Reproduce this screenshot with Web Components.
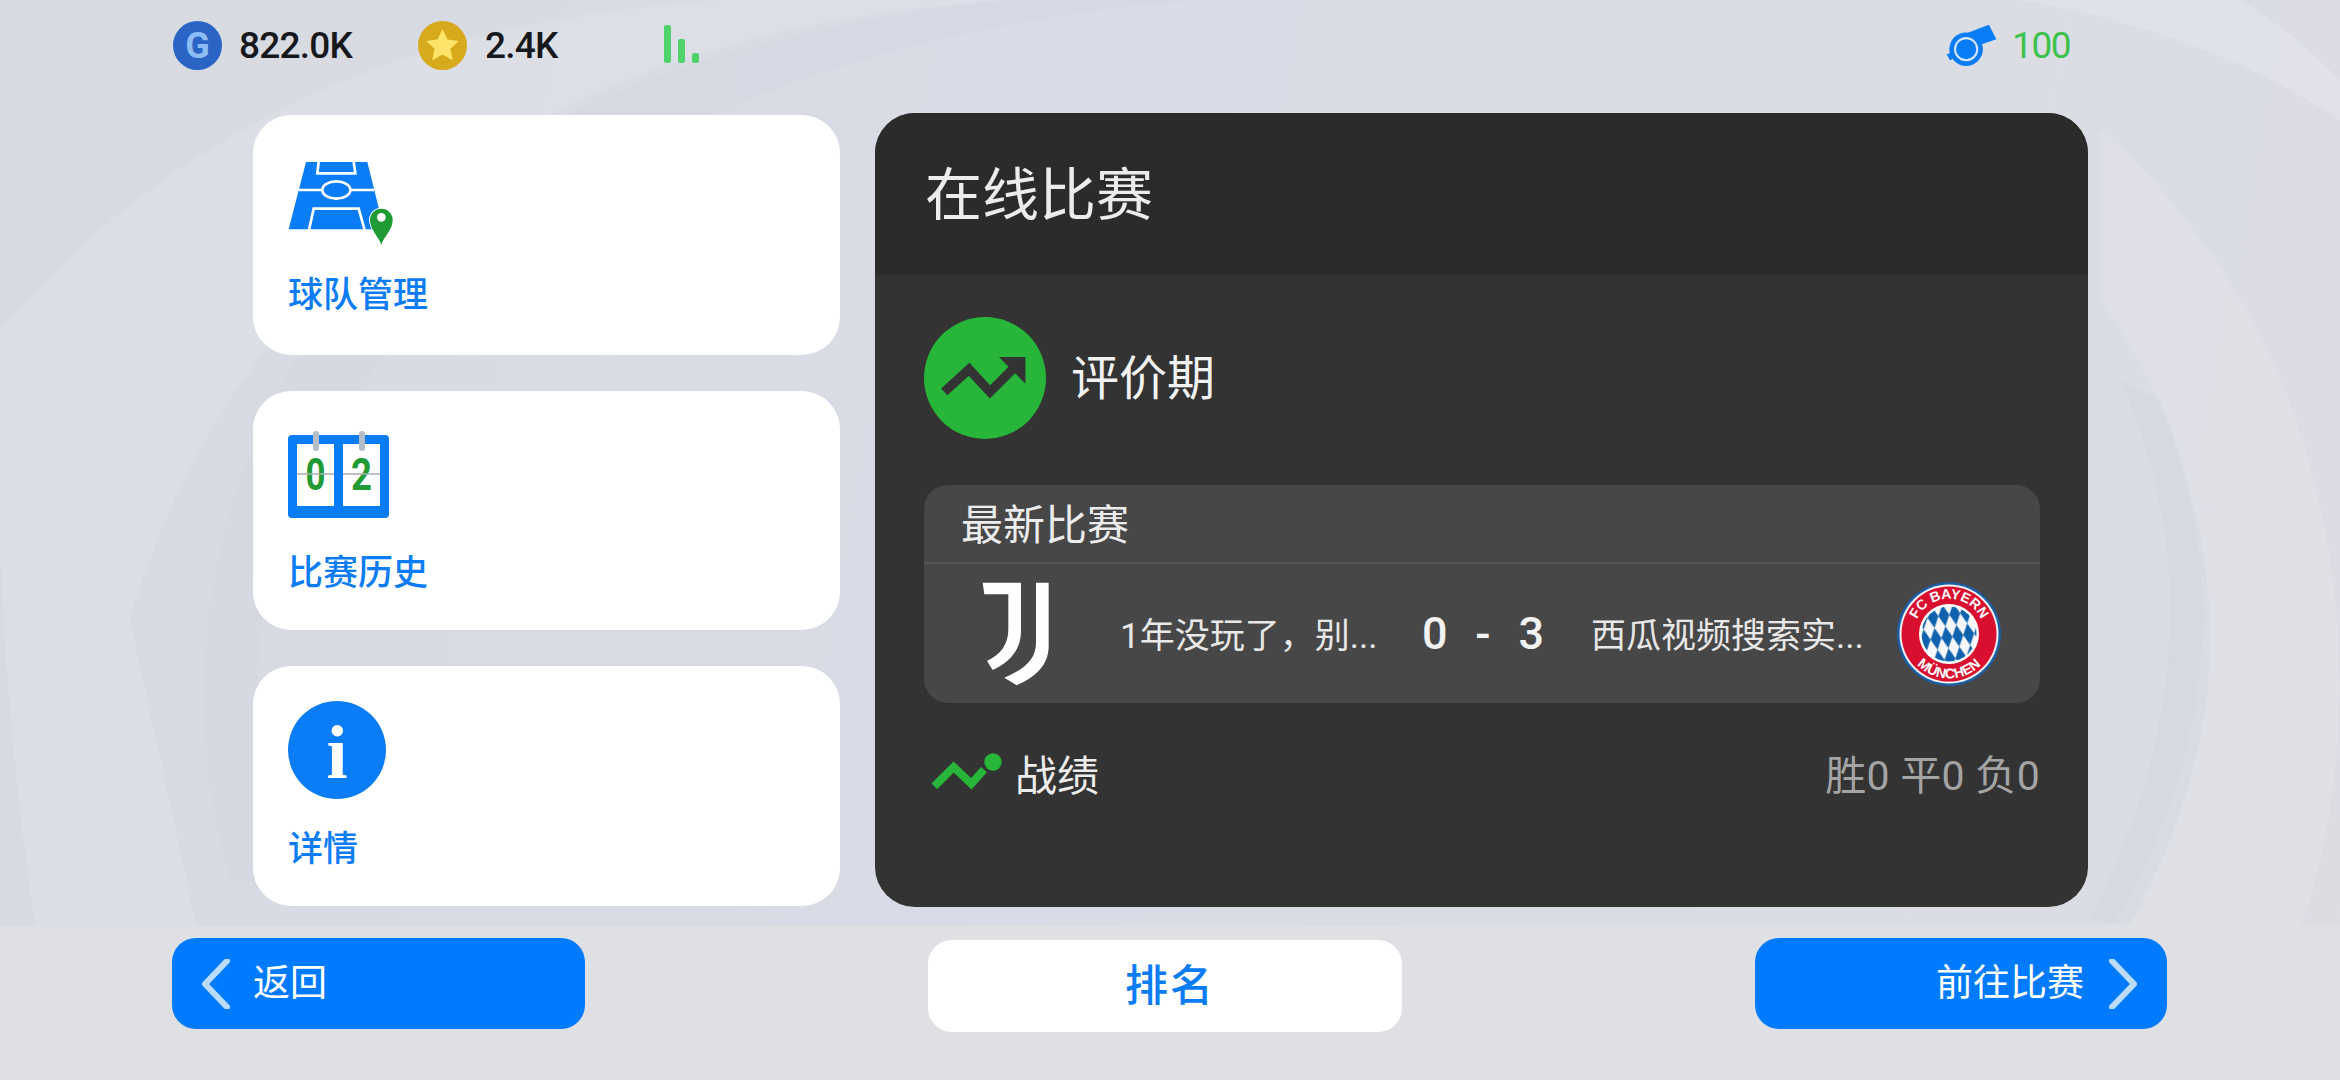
<!DOCTYPE html>
<html lang="zh">
<head>
<meta charset="utf-8">
<title>在线比赛</title>
<style>
  html, body { margin: 0; padding: 0; background: #dadde5; }
</style>
</head>
<body>
<game-screen></game-screen>
<script>
const FONT = `Roboto, "Noto Sans CJK SC", sans-serif`;

const ICONS = {
  gold: `<svg width="49" height="49" viewBox="0 0 49 49">
      <circle cx="24.5" cy="24.5" r="24.5" fill="#2a64c4"/>
      <text x="24" y="37" text-anchor="middle" font-family="Roboto" font-weight="700" font-size="36" fill="#8dbdf5">G</text>
    </svg>`,
  coin: `<svg width="49" height="49" viewBox="0 0 49 49">
      <circle cx="24.5" cy="24.5" r="24.5" fill="#d6aa1c"/>
      <path d="M24.5 8l5 10.6 11.4 1.4-8.4 7.8 2.2 11.4-10.2-5.7-10.2 5.7 2.2-11.4-8.4-7.8 11.4-1.4z" fill="#fde468"/>
    </svg>`,
  bars: `<svg width="36" height="38" viewBox="0 0 36 38">
      <rect x="0" y="0" width="7" height="38" rx="2" fill="#4fd36a"/>
      <rect x="14" y="14" width="7" height="24" rx="2" fill="#4fd36a"/>
      <rect x="28" y="28" width="7" height="10" rx="2" fill="#4fd36a"/>
    </svg>`,
  whistle: `<svg width="52" height="42" viewBox="140 70 155 125">
      <path d="M190 102L268 72l22 43-52 18z" fill="#0a7cf5"/>
      <circle cx="200" cy="145" r="50" fill="#0a7cf5"/>
      <path d="M142 160l20-6 6 16-16 8z" fill="#0a7cf5"/>
      <circle cx="200" cy="145" r="33" fill="none" stroke="#d7e6fa" stroke-width="6"/>
      <circle cx="200" cy="145" r="27" fill="#0a7cf5"/>
    </svg>`,
  pitch: `<svg width="105" height="85" viewBox="140 185 315 255">
      <path d="M194 188H378L412 325 396 390H142z" fill="#0a7cf5"/>
      <path d="M172 272H398M232 188l-4 34H342l-5-34M203 392l14-64H352l18 64" fill="none" stroke="#fff" stroke-width="8"/>
      <ellipse cx="285" cy="272" rx="42" ry="26" fill="#0a7cf5" stroke="#fff" stroke-width="8"/>
      <path d="M420 436c-8-24-34-44-34-74a34 34 0 0 1 68 0c0 30-26 50-34 74z" fill="#1f9a35" stroke="#fff" stroke-width="6" paint-order="stroke"/>
      <circle cx="420" cy="354" r="13" fill="#fff"/>
    </svg>`,
  score: `<svg width="102" height="90" viewBox="0 0 102 90">
      <rect x="0" y="4" width="101" height="83" rx="4" fill="#0a7cf5"/>
      <rect x="9" y="13" width="37" height="62" fill="#fff"/>
      <rect x="55" y="13" width="37" height="62" fill="#fff"/>
      <rect x="25" y="0" width="6" height="20" rx="3" fill="#b4bcc6"/>
      <rect x="71" y="0" width="6" height="20" rx="3" fill="#b4bcc6"/>
      <text x="27.5" y="59" text-anchor="middle" font-family="Roboto" font-weight="700" font-size="44" fill="#1f9a35" textLength="20" lengthAdjust="spacingAndGlyphs">0</text>
      <text x="73.5" y="59" text-anchor="middle" font-family="Roboto" font-weight="700" font-size="44" fill="#1f9a35" textLength="21" lengthAdjust="spacingAndGlyphs">2</text>
      <path d="M9 43H46M55 43H92" stroke="#a9afb6" stroke-width="1.5"/>
    </svg>`,
  info: `<svg width="98" height="98" viewBox="0 0 98 98">
      <circle cx="49" cy="49" r="49" fill="#0a7cf5"/>
      <text x="49" y="77" text-anchor="middle" font-family="Liberation Serif" font-weight="700" font-size="76" fill="#fff">i</text>
    </svg>`,
  trend: `<svg width="122" height="122" viewBox="69 79 368 368">
      <circle cx="253" cy="263" r="184" fill="#27b53a"/>
      <path d="M130 305l75-68 63 68 72-72" fill="none" stroke="#333" stroke-width="28"/>
      <path d="M295 200h80v80z" fill="#333"/>
    </svg>`,
  spark: `<svg width="74" height="40" viewBox="90 100 220 120">
      <path d="M102 203l58-58 53 50 38-42" fill="none" stroke="#27b53a" stroke-width="24"/>
      <circle cx="278" cy="130" r="26" fill="#27b53a"/>
    </svg>`,
  juve: `<svg width="70" height="105" viewBox="180 300 210 315">
      <path d="M185 305H300V450C300 510 262 545 215 567L198 540C240 520 262 490 262 445V340H190z" fill="#fff"/>
      <path d="M345 305H383V495C383 555 340 590 287 613L250 590C310 565 345 535 345 485z" fill="#fff"/>
    </svg>`,
  bayern: `<svg width="104" height="104" viewBox="0 0 104 104">
      <defs>
        <pattern id="rauten" width="11" height="22" patternUnits="userSpaceOnUse" patternTransform="rotate(-8 52 52)">
          <rect width="11" height="22" fill="#f4f6f9"/>
          <path d="M5.5 0L11 11 5.5 22 0 11z" fill="#0f62ad"/>
        </pattern>
        <path id="arcTop" d="M18 60A35 35 0 1 1 86 60"/>
        <path id="arcBottom" d="M8 58A44.400 44.400 0 0 0 96 58"/>
      </defs>
      <circle cx="52" cy="52" r="52" fill="#1b5ea3"/>
      <circle cx="52" cy="52" r="49.500" fill="#f3f3f5"/>
      <circle cx="52" cy="52" r="47.500" fill="#d90f2f"/>
      <circle cx="52" cy="52" r="30" fill="#fff"/>
      <circle cx="52" cy="52" r="27.500" fill="url(#rauten)"/>
      <text font-family="Liberation Sans" font-weight="700" font-size="14" fill="#fff" text-anchor="middle"><textPath href="#arcTop" startOffset="50%">FC BAYERN</textPath></text>
      <text font-family="Liberation Sans" font-weight="700" font-size="14" fill="#fff" text-anchor="middle"><textPath href="#arcBottom" startOffset="50%">MÜNCHEN</textPath></text>
    </svg>`,
  chevronLeft: `<svg width="30" height="50" viewBox="0 0 30 50"><path d="M27 2L5 25l22 23" fill="none" stroke="#bcdcff" stroke-width="6" stroke-linecap="round" stroke-linejoin="round"/></svg>`,
  chevronRight: `<svg width="30" height="50" viewBox="0 0 30 50"><path d="M3 2l22 23L3 48" fill="none" stroke="#bcdcff" stroke-width="6" stroke-linecap="round" stroke-linejoin="round"/></svg>`
};

class GameIcon extends HTMLElement {
  connectedCallback() {
    this.attachShadow({ mode: 'open' });
    this.shadowRoot.innerHTML = `
      <style>
        :host { display: inline-flex; flex: none; }
        svg { display: block; }
      </style>
      ${ICONS[this.getAttribute('name')]}
    `;
  }
}
customElements.define('game-icon', GameIcon);

class StatItem extends HTMLElement {
  connectedCallback() {
    this.attachShadow({ mode: 'open' });
    this.shadowRoot.innerHTML = `
      <style>
        :host {
          display: inline-flex;
          align-items: center;
          gap: var(--stat-gap, 17px);
          font: 500 37px ${FONT};
          letter-spacing: var(--stat-spacing, -0.8px);
          color: var(--stat-color, #16181c);
        }
      </style>
      <slot name="icon"></slot>
      <slot></slot>
    `;
  }
}
customElements.define('stat-item', StatItem);

class TopBar extends HTMLElement {
  connectedCallback() {
    this.attachShadow({ mode: 'open' });
    this.shadowRoot.innerHTML = `
      <style>
        :host {
          display: flex;
          align-items: center;
          height: 90px;
          padding: 0 270px 0 173px;
          box-sizing: border-box;
        }
        .coin { margin-left: 66px; --stat-gap: 18px; }
        .bars { margin-left: 106px; margin-top: -2px; }
        .whistle {
          margin-left: auto;
          --stat-gap: 14px;
          --stat-color: #3cc24a;
          --stat-spacing: -1.5px;
          font-weight: 400;
        }
      </style>
      <stat-item><game-icon slot="icon" name="gold"></game-icon>822.0K</stat-item>
      <stat-item class="coin"><game-icon slot="icon" name="coin"></game-icon>2.4K</stat-item>
      <game-icon class="bars" name="bars"></game-icon>
      <stat-item class="whistle"><game-icon slot="icon" name="whistle"></game-icon>100</stat-item>
    `;
  }
}
customElements.define('top-bar', TopBar);

class MenuCard extends HTMLElement {
  connectedCallback() {
    this.attachShadow({ mode: 'open' });
    this.shadowRoot.innerHTML = `
      <style>
        :host {
          display: flex;
          flex-direction: column;
          height: 240px;
          padding-left: 35px;
          box-sizing: border-box;
          background: #fff;
          border-radius: 38px;
          font: 500 35px/32px ${FONT};
          color: #0a7cf5;
        }
        .icon {
          height: var(--icon-height, 164px);
          display: flex;
          align-items: center;
          padding-top: var(--icon-shift, 0);
          box-sizing: border-box;
        }
      </style>
      <div class="icon"><slot name="icon"></slot></div>
      <slot></slot>
    `;
  }
}
customElements.define('menu-card', MenuCard);

class MatchRow extends HTMLElement {
  connectedCallback() {
    this.attachShadow({ mode: 'open' });
    this.shadowRoot.innerHTML = `
      <style>
        :host {
          display: flex;
          align-items: center;
          height: 139px;
          padding-left: 57px;
          font: 400 35px ${FONT};
          color: #e8e8e8;
        }
        .home { margin-left: 69px; width: 302px; padding-bottom: 3px; white-space: nowrap; }
        .score {
          width: 122px;
          display: flex;
          justify-content: space-between;
          font-weight: 500;
          font-size: 45px;
          color: #f2f2f2;
        }
        .away { margin-left: 47px; width: 306px; padding-bottom: 3px; white-space: nowrap; }
      </style>
      <game-icon name="juve"></game-icon>
      <span class="home"><slot name="home"></slot></span>
      <span class="score"><span>0</span><span>-</span><span>3</span></span>
      <span class="away"><slot name="away"></slot></span>
      <game-icon name="bayern"></game-icon>
    `;
  }
}
customElements.define('match-row', MatchRow);

class MatchPanel extends HTMLElement {
  connectedCallback() {
    this.attachShadow({ mode: 'open' });
    this.shadowRoot.innerHTML = `
      <style>
        :host {
          display: block;
          width: 1213px;
          height: 794px;
          background: #333;
          border-radius: 40px;
          overflow: hidden;
          color: #ececec;
          font-family: ${FONT};
        }
        header {
          height: 162px;
          padding-left: 50px;
          display: flex;
          align-items: center;
          padding-bottom: 8px;
          box-sizing: border-box;
          background: #2b2b2b;
          font-size: 57px;
          font-weight: 400;
        }
        .body { padding: 42px 48px 0 49px; }
        .rating {
          display: flex;
          align-items: center;
          gap: 25px;
          height: 122px;
          font-size: 48px;
          font-weight: 400;
          color: #f2f2f2;
        }
        .rating span { padding-bottom: 8px; }
        .latest {
          margin-top: 46px;
          background: #474747;
          border-radius: 24px;
        }
        .latest h3 {
          margin: 0;
          height: 73px;
          padding: 0 0 4px 37px;
          display: flex;
          align-items: center;
          font-size: 42px;
          font-weight: 400;
          color: #ececec;
          border-bottom: 2px solid #565656;
        }
        .record {
          margin-top: 39px;
          height: 60px;
          padding-left: 6px;
          display: flex;
          align-items: center;
          font-size: 42px;
          font-weight: 400;
        }
        .record game-icon { margin-right: 11px; }
        .totals {
          margin-left: auto;
          font-size: 41px;
          letter-spacing: 0.3px;
          color: #a4a4a4;
        }
      </style>
      <header>在线比赛</header>
      <div class="body">
        <div class="rating"><game-icon name="trend"></game-icon><span>评价期</span></div>
        <section class="latest">
          <h3>最新比赛</h3>
          <match-row>
            <span slot="home">1年没玩了，别...</span>
            <span slot="away">西瓜视频搜索实...</span>
          </match-row>
        </section>
        <div class="record">
          <game-icon name="spark"></game-icon>战绩
          <span class="totals">胜0 平0 负0</span>
        </div>
      </div>
    `;
  }
}
customElements.define('match-panel', MatchPanel);

class NavButton extends HTMLElement {
  connectedCallback() {
    this.attachShadow({ mode: 'open' });
    this.shadowRoot.innerHTML = `
      <style>
        :host {
          display: flex;
          align-items: center;
          height: 91px;
          box-sizing: border-box;
          border-radius: 24px;
          background: #007bff;
          color: #fff;
          font: 400 37px ${FONT};
        }
        :host([variant="light"]) {
          background: #fff;
          color: #0a7cf5;
          font-size: 43px;
          font-weight: 500;
          letter-spacing: 2px;
          justify-content: center;
          padding-left: 10px;
        }
        :host([dir-side="back"]) { padding-left: 28px; gap: 23px; }
        :host([dir-side="forward"]) { justify-content: flex-end; padding-right: 28px; gap: 25px; }
        span { padding-bottom: 8px; }
      </style>
      <slot name="before"></slot>
      <span><slot></slot></span>
      <slot name="after"></slot>
    `;
  }
}
customElements.define('nav-button', NavButton);

class GameScreen extends HTMLElement {
  connectedCallback() {
    this.attachShadow({ mode: 'open' });
    this.shadowRoot.innerHTML = `
      <style>
        :host {
          display: flex;
          flex-direction: column;
          position: relative;
          width: 2340px;
          height: 1080px;
          overflow: hidden;
          background: linear-gradient(100deg, #d8dae1 0%, #d9dce6 45%, #dcdde3 100%);
        }
        .swirl { position: absolute; left: 0; top: 0; }
        top-bar, main, footer { position: relative; }
        main {
          display: flex;
          gap: 35px;
          margin-top: 23px;
          padding-left: 253px;
        }
        .cards {
          width: 587px;
          padding-top: 2px;
          display: flex;
          flex-direction: column;
          gap: 36px;
        }
        .cards menu-card:nth-child(2) { height: 239px; }
        .pitch { --icon-shift: 12px; --icon-height: 165px; }
        .score { --icon-shift: 2px; --icon-height: 167px; }
        .info { --icon-shift: 0px; --icon-height: 168px; }
        footer {
          margin-top: 19px;
          flex: 1;
          padding: 12px 0 0 172px;
          display: flex;
          align-items: flex-start;
          background: #dfe0e4;
        }
        .back { width: 413px; }
        .rank { width: 474px; height: 92px; margin: 2px 0 0 343px; }
        .go { width: 412px; margin-left: 353px; }
      </style>
      <svg class="swirl" width="2340" height="1080" viewBox="0 0 2340 1080" fill="none">
        <path d="M0 330C180 120 420 20 720 0H1000C560 50 240 240 130 620L230 1080H60C20 860-10 600 0 330z" fill="#e6e8ee" opacity=".28"/>
        <path d="M230 880C160 640 220 300 560 110 760 10 1000-10 1200 0 800 30 420 190 290 520 240 650 250 780 300 910z" fill="#cfd3dd" opacity=".3"/>
        <path d="M2340 120C2250 60 2140 20 2020 0H2240C2290 30 2320 60 2340 80z" fill="#e9eaef" opacity=".4"/>
        <path d="M2100 300C2230 480 2240 720 2110 930H2300C2360 760 2360 500 2240 300 2200 230 2150 170 2100 130z" fill="#e7e8ed" opacity=".35"/>
        <path d="M2090 920C2180 740 2200 560 2120 380L2160 400C2240 600 2220 760 2130 925z" fill="#cdd1da" opacity=".3"/>
      </svg>
      <top-bar></top-bar>
      <main>
        <div class="cards">
          <menu-card class="pitch"><game-icon slot="icon" name="pitch"></game-icon>球队管理</menu-card>
          <menu-card class="score"><game-icon slot="icon" name="score"></game-icon>比赛历史</menu-card>
          <menu-card class="info"><game-icon slot="icon" name="info"></game-icon>详情</menu-card>
        </div>
        <match-panel></match-panel>
      </main>
      <footer>
        <nav-button class="back" dir-side="back"><game-icon slot="before" name="chevronLeft"></game-icon>返回</nav-button>
        <nav-button class="rank" variant="light">排名</nav-button>
        <nav-button class="go" dir-side="forward">前往比赛<game-icon slot="after" name="chevronRight"></game-icon></nav-button>
      </footer>
    `;
  }
}
customElements.define('game-screen', GameScreen);
</script>
</body>
</html>
